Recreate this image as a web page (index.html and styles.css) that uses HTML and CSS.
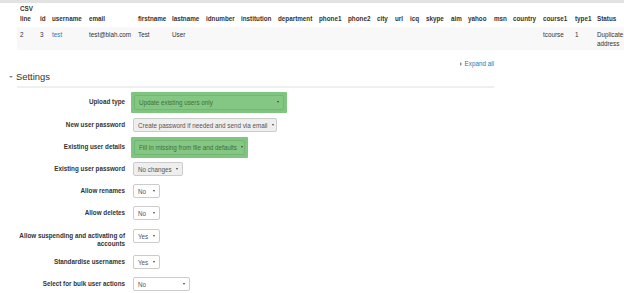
FILE: index.html
```html
<!DOCTYPE html>
<html>
  <head>
    <meta charset="UTF-8" />
    <title>Upload users preview</title>
    <link rel="stylesheet" href="styles.css">
  </head>
  <body>
    <div class="topbar"></div>

    <table class="preview">
      <colgroup>
        <col class="w20"><col class="w12"><col class="w37"><col class="w49"><col class="w34"><col class="w34">
        <col class="w35"><col class="w37"><col class="w41"><col class="w29"><col class="w29"><col class="w18">
        <col class="w15"><col class="w16"><col class="w25"><col class="w17"><col class="w26"><col class="w19">
        <col class="w30"><col class="w32"><col class="w22"><col class="w40">
      </colgroup>
      <thead>
        <tr>
          <th class="wrap">CSV line</th><th>id</th><th>username</th><th>email</th><th>firstname</th><th>lastname</th>
          <th>idnumber</th><th>institution</th><th>department</th><th>phone1</th><th>phone2</th><th>city</th>
          <th>url</th><th>icq</th><th>skype</th><th>aim</th><th>yahoo</th><th>msn</th>
          <th>country</th><th>course1</th><th>type1</th><th class="wrap">Status</th>
        </tr>
      </thead>
      <tbody>
        <tr>
          <td>2</td><td>3</td><td><a href="#">test</a></td><td>test@blah.com</td><td>Test</td><td>User</td>
          <td></td><td></td><td></td><td></td><td></td><td></td>
          <td></td><td></td><td></td><td></td><td></td><td></td>
          <td></td><td>tcourse</td><td>1</td><td>Duplicate address</td>
        </tr>
      </tbody>
    </table>

    <div class="collapsible-actions">
      <a href="#" class="expand-all">Expand all</a>
    </div>

    <div class="section-head">
      <span class="caret-down"></span>
      <span class="section-title">Settings</span>
    </div>
    <div class="rule"></div>

    <div class="settings-form">
      <div class="form-row first">
        <div class="label">Upload type</div>
        <div class="highlight">
          <span class="select select-green upload">Update existing users only</span>
        </div>
      </div>
      <div class="form-row">
        <div class="label">New user password</div>
        <span class="select grey newpass">Create password if needed and send via email</span>
      </div>
      <div class="form-row">
        <div class="label">Existing user details</div>
        <div class="highlight">
          <span class="select select-green details">Fill in missing from file and defaults</span>
        </div>
      </div>
      <div class="form-row">
        <div class="label">Existing user password</div>
        <span class="select grey oldpass">No changes</span>
      </div>
      <div class="form-row">
        <div class="label">Allow renames</div>
        <span class="select tiny">No</span>
      </div>
      <div class="form-row">
        <div class="label">Allow deletes</div>
        <span class="select tiny">No</span>
      </div>
      <div class="form-row tall">
        <div class="label">Allow suspending and activating of accounts</div>
        <span class="select tiny">Yes</span>
      </div>
      <div class="form-row">
        <div class="label">Standardise usernames</div>
        <span class="select tiny">Yes</span>
      </div>
      <div class="form-row">
        <div class="label">Select for bulk user actions</div>
        <span class="select bulk">No</span>
      </div>
    </div>
  </body>
</html>
```

FILE: styles.css
```css
* {
  margin: 0;
  padding: 0;
  box-sizing: border-box;
}

body {
  width: 624px;
  height: 293px;
  overflow: hidden;
  background-color: #fff;
  font-family: "Liberation Sans", Arial, sans-serif;
  font-size: 6.3px;
  color: #333;
}

a {
  color: #1f78b4;
  text-decoration: none;
}

.topbar {
  height: 3px;
  background-color: #e2e2e2;
}

/* preview table */
.preview {
  margin-left: 17px;
  width: 617px;
  table-layout: fixed;
  border-collapse: collapse;
}

.w12 { width: 12px; }
.w15 { width: 15px; }
.w16 { width: 16px; }
.w17 { width: 17px; }
.w18 { width: 18px; }
.w19 { width: 19px; }
.w20 { width: 20px; }
.w22 { width: 22px; }
.w25 { width: 25px; }
.w26 { width: 26px; }
.w29 { width: 29px; }
.w30 { width: 30px; }
.w32 { width: 32px; }
.w34 { width: 34px; }
.w35 { width: 35px; }
.w37 { width: 37px; }
.w40 { width: 40px; }
.w41 { width: 41px; }
.w49 { width: 49px; }

.preview th {
  text-align: left;
  vertical-align: bottom;
  font-weight: bold;
  line-height: 10px;
  padding: 1px 0 3px 3px;
  white-space: nowrap;
}

.preview th.wrap {
  white-space: normal;
}

.preview td {
  vertical-align: top;
  line-height: 9px;
  padding: 3px 0 2px 3px;
  background-color: #f8f8f8;
}

/* expand all */
.collapsible-actions {
  width: 477px;
  margin: 10px 0 0 17px;
  text-align: right;
  line-height: 8px;
}

.expand-all::before {
  content: "";
  display: inline-block;
  border-left: 2.5px solid #888;
  border-top: 2px solid transparent;
  border-bottom: 2px solid transparent;
  margin-right: 3px;
  vertical-align: 0;
}

/* settings header */
.section-head {
  display: flex;
  align-items: center;
  gap: 3px;
  margin: 3px 0 0 9px;
  line-height: 12px;
}

.caret-down {
  border-top: 2.5px solid #888;
  border-left: 2px solid transparent;
  border-right: 2px solid transparent;
}

.section-title {
  font-size: 9.4px;
  color: #333;
}

.rule {
  width: 477px;
  height: 2px;
  margin: 3px 0 0 17px;
  background-color: #efefef;
}

/* form */
.settings-form {
  margin-top: 3px;
  margin-left: 17px;
}

.form-row {
  display: flex;
  align-items: center;
  gap: 6px;
  height: 22px;
}

.form-row.first {
  height: 23px;
  padding-bottom: 1px;
}

.form-row.tall {
  align-items: flex-start;
  height: 27px;
}

.label {
  width: 108px;
  flex-shrink: 0;
  text-align: right;
  font-weight: bold;
  line-height: 8px;
}

.tall .label {
  padding-top: 8px;
}

.tall .select {
  margin-top: 5px;
}

.select {
  display: inline-flex;
  align-items: center;
  justify-content: space-between;
  height: 14px;
  margin-left: 2px;
  padding: 0 4px 0 4px;
  border: 1px solid #ccc;
  border-radius: 2px;
  background-color: #fff;
  color: #555;
  white-space: nowrap;
}

.select::after {
  content: "";
  border-top: 2.5px solid #444;
  border-left: 1.5px solid transparent;
  border-right: 1.5px solid transparent;
  margin-left: 4px;
}

.select.grey {
  background-color: #eee;
}

.newpass { width: 144px; }
.oldpass { width: 50px; }
.tiny { width: 27px; }
.bulk { width: 57px; }

.highlight {
  padding: 3px;
  background-color: #7fc47f;
  border-radius: 1px;
}

.select-green {
  height: 15px;
  margin-left: 0;
  background-color: #84c784;
  border-color: #72b872;
  color: #3f6f3f;
}

.upload { width: 150px; }
.details { width: 111px; }
```
